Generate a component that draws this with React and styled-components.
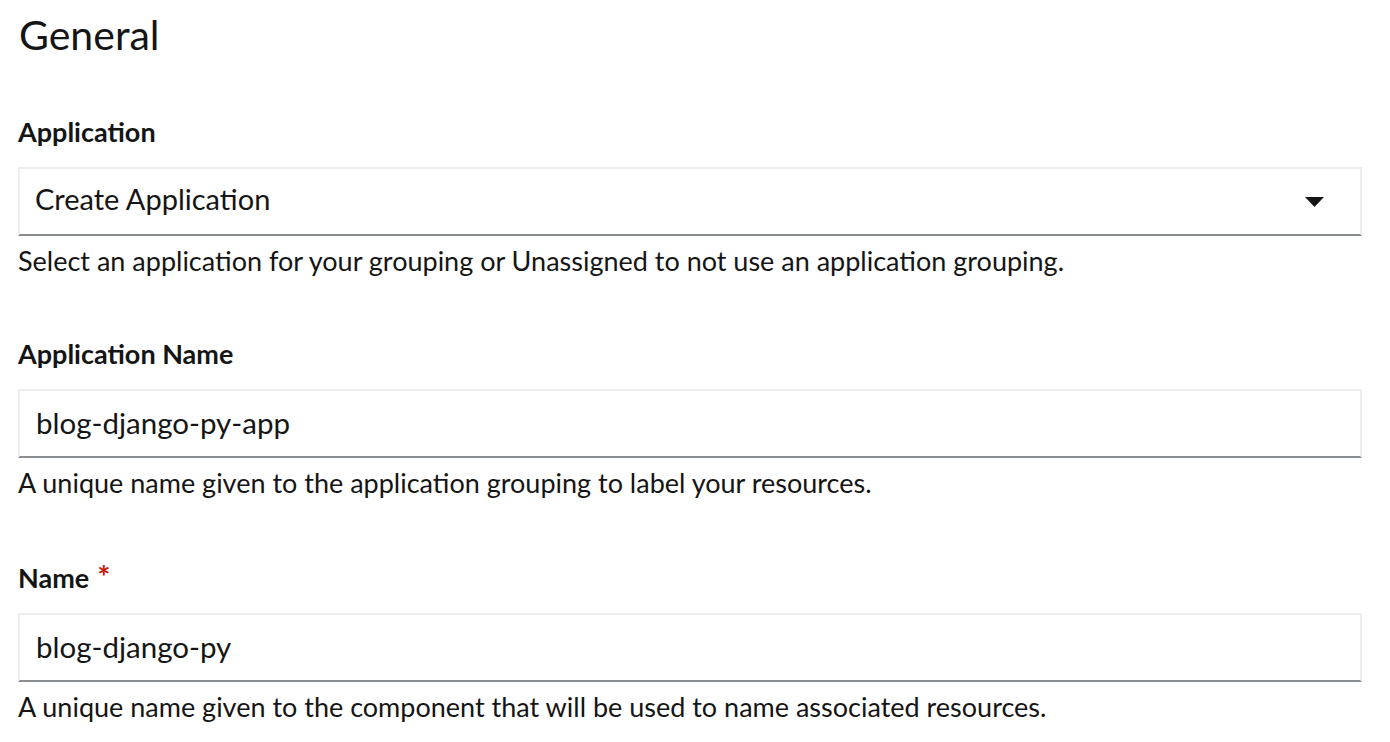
import React, { useState } from 'react';
import styled, { createGlobalStyle } from 'styled-components';

const GlobalStyle = createGlobalStyle`
  body {
    margin: 0;
    background: #ffffff;
    font-family: Lato, "Liberation Sans", sans-serif;
    color: #151515;
  }
`;

const Page = styled.div`
  padding: 9px 18px 0 18px;
  width: 1344px;
`;

const Title = styled.h1`
  margin: 0 0 0 1px;
  font-size: 41px;
  font-weight: 400;
  line-height: 52px;
  color: #151515;
`;

const Form = styled.form`
  display: flex;
  flex-direction: column;
  margin-top: 53px;
`;

const Group = styled.div`
  display: flex;
  flex-direction: column;
  margin-bottom: 57px;

  &:last-child {
    margin-bottom: 0;
  }
`;

const Label = styled.label`
  display: block;
  font-size: 27px;
  font-weight: 700;
  line-height: 36px;
  margin-bottom: 17px;
`;

const Required = styled.span`
  color: #c9190b;
  margin-left: 8px;
  font-size: 31px;
`;

const Field = styled.div`
  box-sizing: border-box;
  height: 69px;
  border: 2px solid #ededed;
  border-bottom-color: #8a8d90;
  display: flex;
  align-items: center;
`;

const Input = styled.input`
  flex: 1;
  border: none;
  outline: none;
  background: transparent;
  height: 100%;
  padding: 0 16px 2px 16px;
  font-family: inherit;
  font-size: 29.5px;
  color: #151515;
`;

const SelectText = styled.span`
  flex: 1;
  padding: 0 15px 6px 15px;
  font-size: 29px;
`;

const Caret = styled.svg`
  width: 19px;
  height: 10px;
  margin-right: 36px;
`;

const Helper = styled.div`
  margin-top: 7px;
  font-size: 27px;
  line-height: 36px;
`;

function TextField({ label, required, value, helper }) {
  const [text, setText] = useState(value);
  return (
    <Group>
      <Label>
        {label}
        {required && <Required>*</Required>}
      </Label>
      <Field>
        <Input value={text} onChange={(e) => setText(e.target.value)} />
      </Field>
      <Helper>{helper}</Helper>
    </Group>
  );
}

export default function App() {
  return (
    <>
      <GlobalStyle />
      <Page>
        <Title>General</Title>
        <Form onSubmit={(e) => e.preventDefault()}>
          <Group>
            <Label>Application</Label>
            <Field>
              <SelectText>Create Application</SelectText>
              <Caret viewBox="0 0 19 10">
                <path d="M0 0 L19 0 L9.5 10 Z" fill="#151515" />
              </Caret>
            </Field>
            <Helper>
              Select an application for your grouping or Unassigned to not use an application grouping.
            </Helper>
          </Group>
          <TextField
            label="Application Name"
            value="blog-django-py-app"
            helper="A unique name given to the application grouping to label your resources."
          />
          <TextField
            label="Name"
            required
            value="blog-django-py"
            helper="A unique name given to the component that will be used to name associated resources."
          />
        </Form>
      </Page>
    </>
  );
}
